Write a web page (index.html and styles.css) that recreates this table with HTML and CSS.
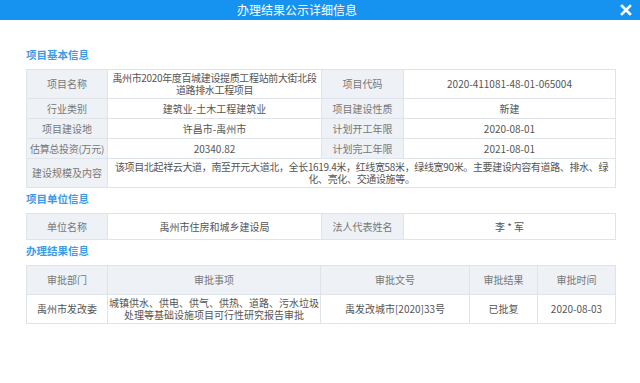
FILE: index.html
```html
<!DOCTYPE html>
<html lang="zh-CN">
<head>
  <meta charset="UTF-8">
  <title>办理结果公示详细信息</title>
  <link rel="stylesheet" href="styles.css">
</head>
<body>
  <div class="dialog">
    <div class="dialog-header">
      <span class="dialog-title">办理结果公示详细信息</span>
      <svg class="close" width="12" height="12" viewBox="0 0 12 12">
        <path d="M2 2 L10 10 M10 2 L2 10" stroke="#fff" stroke-width="2.6" stroke-linecap="square"/>
      </svg>
    </div>

    <div class="content">
      <h3 class="section-title">项目基本信息</h3>
      <table class="info">
        <colgroup>
          <col style="width:81px"><col style="width:214px"><col style="width:82px"><col>
        </colgroup>
        <tr>
          <th>项目名称</th>
          <td class="tight">禹州市2020年度百城建设提质工程站前大街北段道路排水工程项目</td>
          <th>项目代码</th>
          <td>2020-411081-48-01-065004</td>
        </tr>
        <tr class="single">
          <th>行业类别</th>
          <td>建筑业-土木工程建筑业</td>
          <th>项目建设性质</th>
          <td>新建</td>
        </tr>
        <tr class="single">
          <th>项目建设地</th>
          <td>许昌市-禹州市</td>
          <th>计划开工年限</th>
          <td>2020-08-01</td>
        </tr>
        <tr class="single">
          <th class="nowrap">估算总投资(万元)</th>
          <td>20340.82</td>
          <th>计划完工年限</th>
          <td>2021-08-01</td>
        </tr>
        <tr>
          <th>建设规模及内容</th>
          <td class="tight" colspan="3">该项目北起祥云大道，南至开元大道北，全长1619.4米，红线宽58米，绿线宽90米。主要建设内容有道路、排水、绿化、亮化、交通设施等。</td>
        </tr>
      </table>

      <h3 class="section-title">项目单位信息</h3>
      <table class="info">
        <colgroup>
          <col style="width:81px"><col style="width:214px"><col style="width:82px"><col>
        </colgroup>
        <tr class="tall">
          <th>单位名称</th>
          <td>禹州市住房和城乡建设局</td>
          <th>法人代表姓名</th>
          <td>李 * 军</td>
        </tr>
      </table>

      <h3 class="section-title">办理结果信息</h3>
      <table class="info result">
        <colgroup>
          <col style="width:81px"><col style="width:213px"><col style="width:149px"><col style="width:68px"><col>
        </colgroup>
        <tr class="head">
          <th>审批部门</th>
          <th>审批事项</th>
          <th>审批文号</th>
          <th>审批结果</th>
          <th>审批时间</th>
        </tr>
        <tr>
          <td>禹州市发改委</td>
          <td>城镇供水、供电、供气、供热、道路、污水垃圾处理等基础设施项目可行性研究报告审批</td>
          <td>禹发改城市[2020]33号</td>
          <td>已批复</td>
          <td>2020-08-03</td>
        </tr>
      </table>
    </div>
  </div>
</body>
</html>
```

FILE: styles.css
```css
body {
  margin: 0;
  background: #fff;
  font-family: "Noto Sans CJK SC", "Noto Sans", sans-serif;
  color: #555;
}
.dialog {
  width: 640px;
  height: 383px;
  background: #fff;
}
.dialog-header {
  height: 20px;
  background: #1693f1;
  display: flex;
  align-items: center;
  justify-content: space-between;
  padding: 0 8px 0 237px;
}
.dialog-title {
  color: #fff;
  font-size: 12px;
  line-height: 20px;
}
.close {
  display: block;
  margin-top: -1px;
}
.content {
  padding: 28px 24px 0 26px;
}
.section-title {
  margin: 0 0 7px;
  font-size: 10.5px;
  line-height: 14px;
  font-weight: bold;
  color: #3d9be6;
}
.info {
  width: 590px;
  border-collapse: collapse;
  table-layout: fixed;
  margin-bottom: 4px;
  font-size: 10px;
  line-height: 12px;
}
.info th,
.info td {
  border: 1px solid #dfe4ea;
  padding: 2px 1px;
  text-align: center;
  font-weight: normal;
}
.info th {
  background: #eef1f5;
  color: #777;
}
.info th.nowrap {
  white-space: nowrap;
  letter-spacing: -0.3px;
}
.info td {
  color: #555;
}
.info td.tight {
  letter-spacing: -0.35px;
}
.info tr.single {
  height: 20px;
}
.info tr.tall {
  height: 26px;
}
.result tr.head {
  height: 29px;
}
```
